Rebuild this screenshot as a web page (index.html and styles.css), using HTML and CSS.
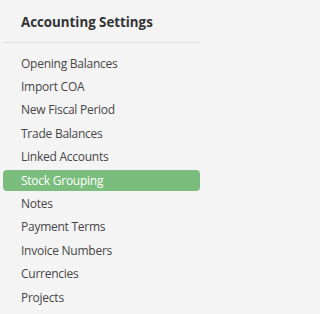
FILE: index.html
```html
<!DOCTYPE html>
<html>
<head>
<meta charset="utf-8">
<link rel="stylesheet" href="styles.css">
</head>
<body>
<div class="panel">
  <h2 class="title">Accounting Settings</h2>
  <hr class="divider">
  <ul class="menu">
    <li class="item">Opening Balances</li>
    <li class="item">Import COA</li>
    <li class="item">New Fiscal Period</li>
    <li class="item">Trade Balances</li>
    <li class="item">Linked Accounts</li>
    <li class="item active">Stock Grouping</li>
    <li class="item">Notes</li>
    <li class="item">Payment Terms</li>
    <li class="item">Invoice Numbers</li>
    <li class="item">Currencies</li>
    <li class="item">Projects</li>
  </ul>
</div>
</body>
</html>
```
FILE: styles.css
```css
html, body {
  margin: 0;
  padding: 0;
  background: #f4f4f4;
}
.panel {
  width: 197px;
  margin-left: 3px;
  font-family: "Open Sans", sans-serif;
  color: #464646;
}
.title {
  margin: 0;
  padding: 11.5px 0 0 18px;
  font-size: 13.3px;
  font-weight: 700;
  line-height: 20px;
  color: #333;
}
.divider {
  border: 0;
  border-top: 1px solid #e2e2e2;
  margin: 10.5px 0 9.6px;
}
.menu {
  list-style: none;
  margin: 0;
  padding: 0;
}
.item {
  font-size: 12px;
  letter-spacing: -0.25px;
  line-height: 21.4px;
  padding-left: 18px;
  margin-bottom: 2px;
  border-radius: 4px;
}
.active {
  background: #7bbd7d;
  color: #fff;
}
```
